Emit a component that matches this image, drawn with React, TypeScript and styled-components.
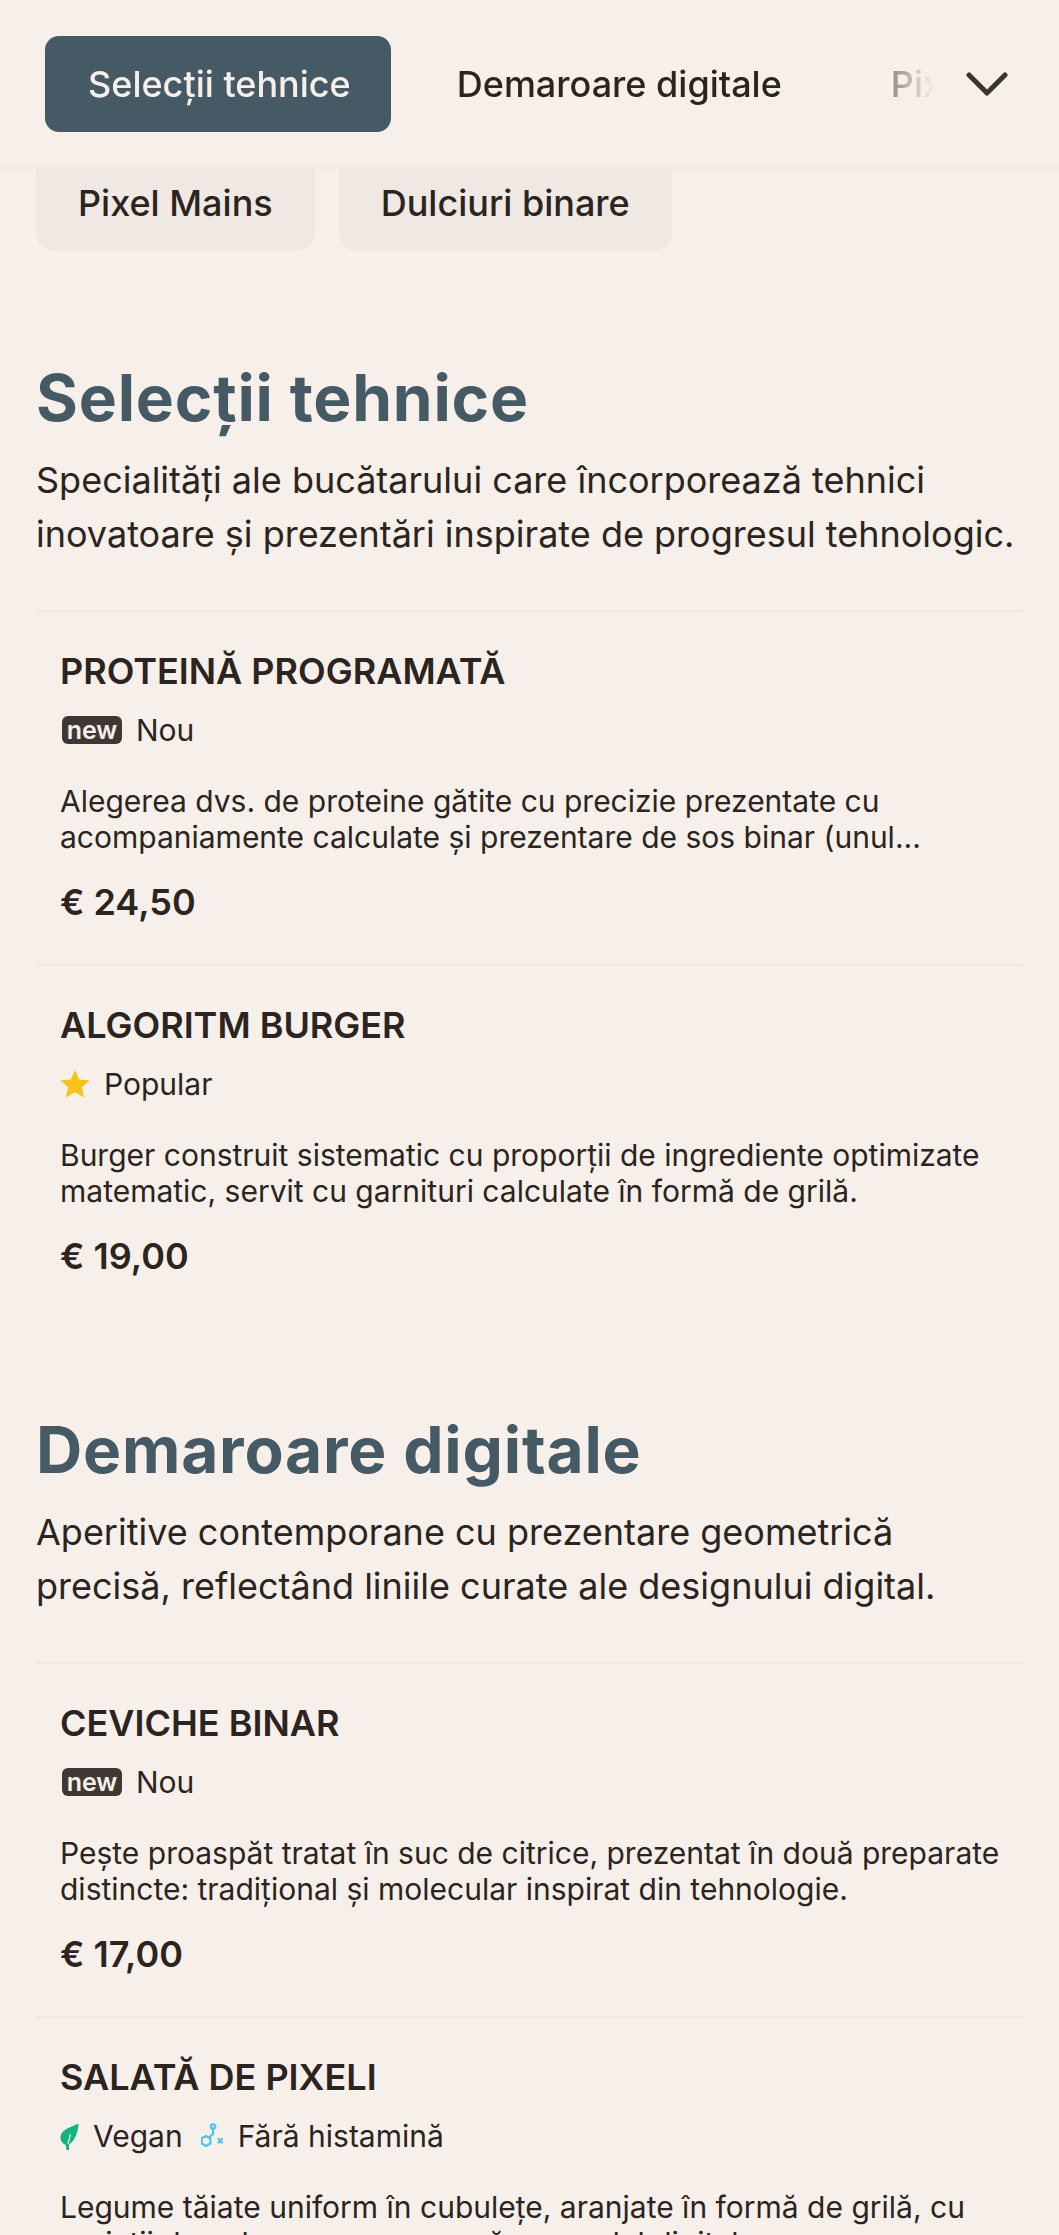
import React from "react";
import styled, { createGlobalStyle } from "styled-components";

const Global = createGlobalStyle`
  html, body { margin: 0; padding: 0; background: #f7f0ea; height: 2235px; overflow: hidden; }
  body { font-family: Inter, "Liberation Sans", sans-serif; color: #2b2420; }
  * { box-sizing: border-box; }
`;

const Page = styled.div`
  height: 2235px;
  overflow: hidden;
  background: #f7f0ea;
`;

const Nav = styled.nav`
  position: relative;
  z-index: 2;
  height: 169px;
  display: flex;
  align-items: center;
  padding-left: 45px;
  background: #f7f0ea;
  border-bottom: 2px solid #f1eae4;
`;

const TabsViewport = styled.div`
  position: relative;
  width: 890px;
  overflow: hidden;
  display: flex;
  gap: 23px;
  -webkit-mask-image: linear-gradient(to right, #000 0, #000 800px, transparent 890px);
  mask-image: linear-gradient(to right, #000 0, #000 800px, transparent 890px);
`;

const Tab = styled.div<{ $active?: boolean }>`
  flex: none;
  height: 96px;
  display: flex;
  align-items: center;
  padding: 0 ${(p) => (p.$active ? "40px" : "43px")} 0 43px;
  border-radius: 14px;
  font-size: 36px;
  font-weight: 500;
  background: ${(p) => (p.$active ? "#465a66" : "transparent")};
  color: ${(p) => (p.$active ? "#f7f0ea" : "#2b2420")};
`;

const Chevron = styled.svg`
  position: absolute;
  left: 966px;
  top: 71px;
  width: 42px;
  height: 26px;
`;

const Pills = styled.div`
  display: flex;
  gap: 24px;
  padding-left: 36px;
  margin-top: -28px;
  margin-bottom: 108px;
`;

const Pill = styled.div`
  height: 110px;
  display: flex;
  align-items: center;
  padding: 14px 42px 0;
  border-radius: 18px;
  background: #f0e8e3;
  font-size: 36px;
  font-weight: 500;
`;

const Section = styled.section`
  padding: 0 36px;
  margin-bottom: 93px;
`;

const Heading = styled.h2`
  margin: 0;
  font-size: 64px;
  line-height: 78px;
  font-weight: 700;
  letter-spacing: 0.8px;
  color: #465a66;
`;

const Lead = styled.p`
  margin: 16px 0 49px;
  font-size: 36px;
  line-height: 54px;
  color: #2b2420;
`;

const Item = styled.article`
  border-top: 2px solid #f0e9e3;
  padding: 38px 20px 0 24px;
  height: 354px;
`;

const Name = styled.h3`
  margin: 0;
  font-size: 36px;
  line-height: 42px;
  font-weight: 600;
`;

const Tags = styled.div`
  display: flex;
  align-items: center;
  gap: 18px;
  margin-top: 18px;
  height: 40px;
`;

const Tag = styled.span`
  display: inline-flex;
  align-items: center;
  gap: 14px;
  font-size: 30px;
`;

const NewBadge = styled.span`
  display: inline-flex;
  align-items: center;
  justify-content: center;
  width: 60px;
  height: 28px;
  margin-left: 2px;
  border-radius: 6px;
  background: #3f3733;
  color: #f7f0ea;
  font-size: 25px;
  font-weight: 600;
  line-height: 1;
`;

const Desc = styled.p`
  margin: 33px 0 0;
  font-size: 30px;
  line-height: 36px;
`;

const Price = styled.div`
  margin-top: 25px;
  font-size: 36px;
  line-height: 44px;
  font-weight: 600;
`;

const Star = () => (
  <svg width="30" height="30" viewBox="1 1 22 21.5"><path fill="#f6c21c" d="M12 1.5l3.1 7 7.6.7-5.7 5 1.7 7.5L12 17.8l-6.7 3.9L7 14.2l-5.7-5 7.6-.7z" /></svg>
);
const Leaf = () => (
  <svg width="19" height="27" viewBox="0 0 19 27"><path fill="#14b37d" d="M18.5.5C12 4 1 6 .5 14c-.2 4 2.500 7 5 7.500l1 5.500H9v-5.500C15 18 18 9 18.500.5z" /><path d="M8 21l2.500-10" stroke="#f7f0ea" strokeWidth="1.1" fill="none" /></svg>
);
const Histamine = () => (
  <svg width="23" height="27" viewBox="0 0 23 27" fill="none" stroke="#4fc3e8" strokeWidth="2.2" strokeLinecap="round" strokeLinejoin="round"><circle cx="12" cy="3.500" r="2.200" /><path d="M12 5.700v5.300l-4 3.500" /><path d="M5 13l4.400 2.500v5L5 23 .6 20.500v-5z" /><path d="M17.500 16l3.500 3.500M21 16l-3.500 3.500" /></svg>
);

export default function App() {
  return (
    <Page>
      <Global />
      <Nav>
        <TabsViewport>
          <Tab $active>Selecții tehnice</Tab>
          <Tab>Demaroare digitale</Tab>
          <Tab>Pixel Mains</Tab>
        </TabsViewport>
        <Chevron viewBox="0 0 42 26" fill="none" stroke="#3b342f" strokeWidth="5" strokeLinecap="round" strokeLinejoin="round"><path d="M3 4l18 18L39 4" /></Chevron>
      </Nav>
      <Pills>
        <Pill>Pixel Mains</Pill>
        <Pill>Dulciuri binare</Pill>
      </Pills>
      <Section>
        <Heading>Selecții tehnice</Heading>
        <Lead>Specialități ale bucătarului care încorporează tehnici inovatoare și prezentări inspirate de progresul tehnologic.</Lead>
        <Item>
          <Name>PROTEINĂ PROGRAMATĂ</Name>
          <Tags><Tag><NewBadge>new</NewBadge>Nou</Tag></Tags>
          <Desc>Alegerea dvs. de proteine gătite cu precizie prezentate cu acompaniamente calculate și prezentare de sos binar (unul...</Desc>
          <Price>€ 24,50</Price>
        </Item>
        <Item>
          <Name>ALGORITM BURGER</Name>
          <Tags><Tag><Star />Popular</Tag></Tags>
          <Desc>Burger construit sistematic cu proporții de ingrediente optimizate matematic, servit cu garnituri calculate în formă de grilă.</Desc>
          <Price>€ 19,00</Price>
        </Item>
      </Section>
      <Section>
        <Heading>Demaroare digitale</Heading>
        <Lead>Aperitive contemporane cu prezentare geometrică precisă, reflectând liniile curate ale designului digital.</Lead>
        <Item>
          <Name>CEVICHE BINAR</Name>
          <Tags><Tag><NewBadge>new</NewBadge>Nou</Tag></Tags>
          <Desc>Pește proaspăt tratat în suc de citrice, prezentat în două preparate distincte: tradițional și molecular inspirat din tehnologie.</Desc>
          <Price>€ 17,00</Price>
        </Item>
        <Item>
          <Name>SALATĂ DE PIXELI</Name>
          <Tags><Tag><Leaf />Vegan</Tag><Tag><Histamine />Fără histamină</Tag></Tags>
          <Desc>Legume tăiate uniform în cubulețe, aranjate în formă de grilă, cu variații de culoare care creează un model digital.</Desc>
          <Price>€ 15,50</Price>
        </Item>
      </Section>
    </Page>
  );
}
